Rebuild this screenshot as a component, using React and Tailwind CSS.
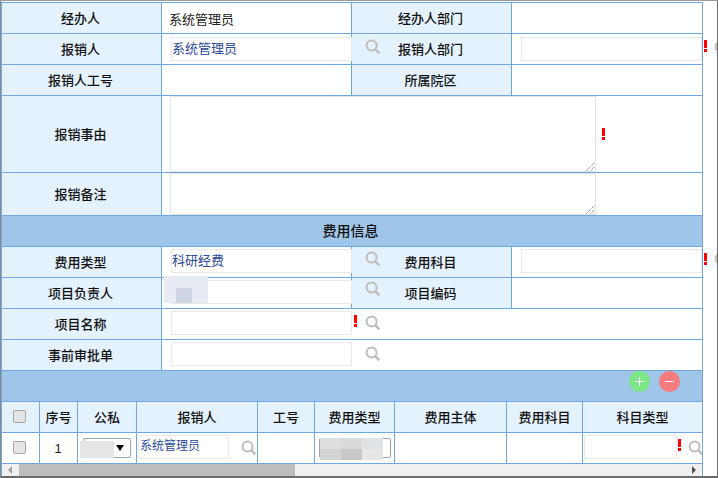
const FONT = "font-['Liberation_Sans','Noto_Sans_CJK_SC',sans-serif]";

function Search({ className = "" }) {
  return (
    <svg viewBox="0 0 16 16" className={"absolute w-[16px] h-[16px] " + className} fill="none">
      <circle cx="6.6" cy="6.6" r="5" stroke="#bdbdbd" strokeWidth="2" />
      <path d="M10.4 10.4 L14.4 14.4" stroke="#bdbdbd" strokeWidth="2.6" />
    </svg>
  );
}

function Bang({ className = "" }) {
  return (
    <span className={"absolute flex flex-col items-center gap-[1px] w-[3px] " + className}>
      <span className="block w-[3px] h-[8px] bg-[#ff0000]" />
      <span className="block w-[3px] h-[3px] bg-[#ff0000]" />
    </span>
  );
}

function Label({ w, children, className = "" }) {
  return (
    <div className={"relative shrink-0 flex items-center justify-center pt-[1px] bg-[#e3f2fd] border-r border-[#6fa8dc] text-[13px] font-medium text-[#111] " + w + " " + className}>
      {children}
    </div>
  );
}

function Field({ w, children, className = "" }) {
  return <div className={"relative shrink-0 " + w + " " + className}>{children}</div>;
}

function Input({ className = "", children }) {
  return (
    <div className={"absolute h-[24px] bg-white border border-[#e8e8e4] text-[#2a4a9a] " + className}>
      {children}
    </div>
  );
}

function Row({ h = "h-[31px]", children }) {
  return <div className={"relative flex border-b border-[#6fa8dc] " + h}>{children}</div>;
}

function Resize() {
  return (
    <svg viewBox="0 0 9 9" className="absolute right-0 bottom-0 w-[9px] h-[9px]">
      <path d="M0.5 8.5 L8.5 0.5 M4.5 8.5 L8.5 4.5" stroke="#666" strokeWidth="1" strokeDasharray="1 1" />
    </svg>
  );
}

function Th({ w, children, last }) {
  return (
    <div className={"shrink-0 flex items-center justify-center pt-[1px] text-[13px] font-medium text-[#111] " + w + (last ? "" : " border-r border-[#6fa8dc]")}>
      {children}
    </div>
  );
}

function Check() {
  return <span className="block w-[13px] h-[13px] -mt-[2px] -ml-[2px] rounded-[2px] bg-[#e4e4e4] border border-[#a6a6a6]" />;
}

const COLS = ["w-[38px]", "w-[38px]", "w-[59px]", "w-[121px]", "w-[57px]", "w-[80px]", "w-[112px]", "w-[76px]", "w-[119px]"];

export default function App() {
  return (
    <div className={"relative w-[718px] h-[478px] overflow-hidden bg-white border-t border-[#9a9a9a] " + FONT}>
      <div className="w-[702px] ml-[1px] mt-[1px] border-t border-l border-r border-[#6fa8dc] relative">
        <Row>
          <Label w="w-[160px]" className="pr-[2px]">经办人</Label>
          <Field w="w-[190px]" className="border-r border-[#6fa8dc] text-[13px] text-[#222] leading-[34px] pl-[7px]">系统管理员</Field>
          <Label w="w-[160px]" className="pr-[2px]">经办人部门</Label>
          <Field w="w-[190px]" />
        </Row>
        <Row>
          <Label w="w-[160px]" className="pr-[2px]">报销人</Label>
          <Field w="w-[190px]" className="border-r border-[#6fa8dc]">
            <Input className="left-[9px] top-[3px] w-[181px] text-[13px] leading-[22px]">系统管理员</Input>
          </Field>
          <Label w="w-[160px]" className="pr-[2px]">
            <Search className="left-[13px] top-[5px] z-10" />
            报销人部门
          </Label>
          <Field w="w-[190px]">
            <Input className="left-[9px] top-[3px] w-[181px]" />
            <Bang className="left-[192px] top-[6px]" />
            <Search className="left-[202px] top-[6px]" />
          </Field>
        </Row>
        <Row>
          <Label w="w-[160px]" className="pr-[2px]">报销人工号</Label>
          <Field w="w-[190px]" className="border-r border-[#6fa8dc]" />
          <Label w="w-[160px]" className="pr-[2px]">所属院区</Label>
          <Field w="w-[190px]" />
        </Row>
        <Row h="h-[77px]">
          <Label w="w-[160px]" className="pr-[2px]">报销事由</Label>
          <Field w="grow">
            <div className="absolute left-[8px] top-[0px] w-[426px] h-[76px] bg-white border border-[#e4e4e0]">
              <Resize />
            </div>
            <Bang className="left-[440px] top-[32px]" />
          </Field>
        </Row>
        <Row h="h-[43px]">
          <Label w="w-[160px]" className="pr-[2px]">报销备注</Label>
          <Field w="grow">
            <div className="absolute left-[8px] top-[0px] w-[426px] h-[42px] bg-white border border-[#e4e4e0]">
              <Resize />
            </div>
          </Field>
        </Row>
        <div className="h-[31px] bg-[#9fc5e8] border-b border-[#6fa8dc] flex items-center justify-center pr-[3px] text-[14px] font-medium text-[#111]">
          费用信息
        </div>
        <Row>
          <Label w="w-[160px]" className="pr-[2px]">费用类型</Label>
          <Field w="w-[190px]" className="border-r border-[#6fa8dc]">
            <Input className="left-[9px] top-[2px] w-[181px] text-[13px] leading-[22px]">科研经费</Input>
          </Field>
          <Label w="w-[160px]" className="pr-[2px]">
            <Search className="left-[13px] top-[4px] z-10" />
            费用科目
          </Label>
          <Field w="w-[190px]">
            <Input className="left-[9px] top-[2px] w-[181px]" />
            <Bang className="left-[192px] top-[6px]" />
            <Search className="left-[202px] top-[5px]" />
          </Field>
        </Row>
        <Row>
          <Label w="w-[160px]" className="pr-[2px]">项目负责人</Label>
          <Field w="w-[190px]" className="border-r border-[#6fa8dc]">
            <Input className="left-[9px] top-[2px] w-[181px]" />
            <div className="absolute left-[2px] top-[-2px] w-[44px] h-[27px] bg-[#e6ebf4]">
              <div className="absolute left-[12px] top-[12px] w-[16px] h-[15px] bg-[#d0d5e3]" />
            </div>
          </Field>
          <Label w="w-[160px]" className="pr-[2px]">
            <Search className="left-[13px] top-[3px] z-10" />
            项目编码
          </Label>
          <Field w="w-[190px]" />
        </Row>
        <Row>
          <Label w="w-[160px]" className="pr-[2px]">项目名称</Label>
          <Field w="grow">
            <Input className="left-[9px] top-[2px] w-[181px]" />
            <Bang className="left-[192px] top-[6px]" />
            <Search className="left-[203px] top-[6px]" />
          </Field>
        </Row>
        <Row>
          <Label w="w-[160px]" className="pr-[2px]">事前审批单</Label>
          <Field w="grow">
            <Input className="left-[9px] top-[2px] w-[181px]" />
            <Search className="left-[203px] top-[6px]" />
          </Field>
        </Row>
        <div className="h-[31px] bg-[#9fc5e8] border-b border-[#6fa8dc] flex justify-end gap-[9px] pr-[22px]">
          <span className="w-[21px] h-[21px] rounded-full bg-[#7de686] flex items-center justify-center">
            <svg viewBox="0 0 11 11" className="w-[11px] h-[11px]"><path d="M5.5 1V10M1 5.5H10" stroke="#fff" strokeWidth="1" /></svg>
          </span>
          <span className="w-[21px] h-[21px] rounded-full bg-[#f47c7c] flex items-center justify-center">
            <svg viewBox="0 0 11 11" className="w-[11px] h-[11px]"><path d="M1 5.5H10" stroke="#fff" strokeWidth="1" /></svg>
          </span>
        </div>
        <div className="flex h-[31px] bg-[#e3f2fd] border-b border-[#6fa8dc]">
          <Th w={COLS[0]}><Check /></Th>
          <Th w={COLS[1]}>序号</Th>
          <Th w={COLS[2]}>公私</Th>
          <Th w={COLS[3]}>报销人</Th>
          <Th w={COLS[4]}>工号</Th>
          <Th w={COLS[5]}>费用类型</Th>
          <Th w={COLS[6]}>费用主体</Th>
          <Th w={COLS[7]}>费用科目</Th>
          <Th w={COLS[8]} last>科目类型</Th>
        </div>
        <div className="flex h-[31px] border-b border-[#6fa8dc]">
          <div className={COLS[0] + " shrink-0 border-r border-[#6fa8dc] flex items-center justify-center"}><Check /></div>
          <div className={COLS[1] + " shrink-0 border-r border-[#6fa8dc] flex items-center justify-center pr-[1px] pt-[1px] text-[13px] text-[#222]"}>1</div>
          <div className={COLS[2] + " shrink-0 border-r border-[#6fa8dc] relative"}>
            <div className="absolute left-[5px] top-[5px] w-[48px] h-[20px] border border-[#a0a0a0] rounded-[2px] bg-white">
              <span className="absolute right-[6px] top-[6px] w-0 h-0 border-l-[4px] border-r-[4px] border-t-[6px] border-l-transparent border-r-transparent border-t-black" />
            </div>
            <div className="absolute left-[2px] top-[8px] w-[34px] h-[17px] bg-[#e3e5e7]" />
          </div>
          <div className={COLS[3] + " shrink-0 border-r border-[#6fa8dc] relative"}>
            <Input className="left-[1px] top-[2px] w-[91px] text-[12px] leading-[20px] pl-[1px]">系统管理员</Input>
            <Search className="left-[104px] top-[7px]" />
          </div>
          <div className={COLS[4] + " shrink-0 border-r border-[#6fa8dc]"} />
          <div className={COLS[5] + " shrink-0 border-r border-[#6fa8dc] relative"}>
            <div className="absolute left-[4px] top-[5px] w-[72px] h-[20px] border border-[#a0a0a0] rounded-[2px] bg-white" />
            <div className="absolute left-[5px] top-[5px] w-[63px] h-[22px] grid grid-cols-3">
              <span className="bg-[#dcdee0]" />
              <span className="bg-[#d8dadc]" />
              <span className="bg-[#e0e3e6]" />
              <span className="bg-[#d4d4d4]" />
              <span className="bg-[#c8c8c8]" />
              <span className="bg-[#e6e6e6]" />
            </div>
          </div>
          <div className={COLS[6] + " shrink-0 border-r border-[#6fa8dc]"} />
          <div className={COLS[7] + " shrink-0 border-r border-[#6fa8dc]"} />
          <div className={COLS[8] + " shrink-0 relative overflow-hidden"}>
            <Input className="left-[1px] top-[2px] w-[93px]" />
            <Bang className="left-[95px] top-[6px]" />
            <Search className="left-[105px] top-[7px]" />
          </div>
        </div>
        <div className="relative h-[12px] bg-[#f0f0f0] flex items-center">
          <span className="w-0 h-0 ml-[6px] border-t-[4px] border-b-[4px] border-r-[4px] border-t-transparent border-b-transparent border-r-[#a0a0a0]" />
          <div className="ml-[7px] w-[276px] h-[12px] bg-[#bdbdbd]" />
          <span className="absolute right-[6px] w-0 h-0 border-t-[4px] border-b-[4px] border-l-[4px] border-t-transparent border-b-transparent border-l-[#505050]" />
        </div>
      </div>

      <div className="absolute right-0 top-0 bottom-0 w-[1px] bg-[#6b6b6b] z-20" />
      <div className="absolute left-0 right-0 bottom-0 h-[2px] bg-[#6b6b6b] z-20" />
      <div className="absolute left-0 top-0 bottom-0 w-[1px] bg-[#8a8a8a] z-20" />
    </div>
  );
}
